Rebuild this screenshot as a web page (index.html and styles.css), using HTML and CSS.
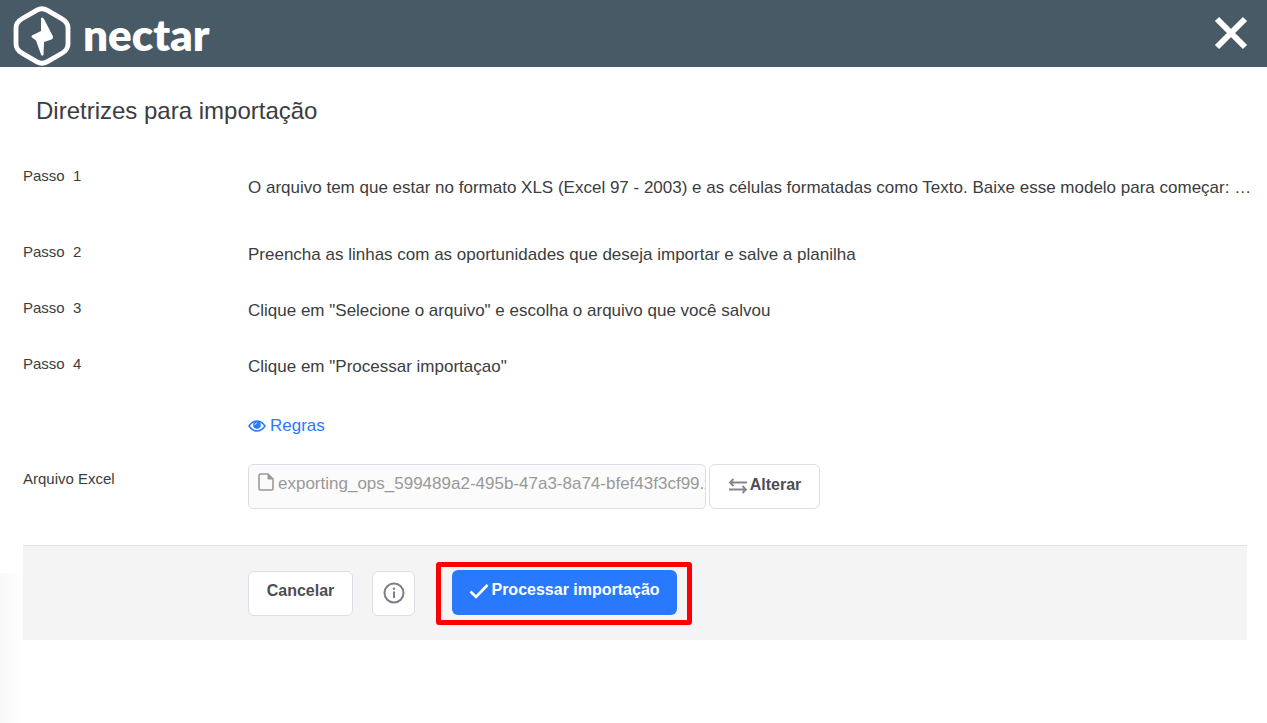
FILE: index.html
```html
<!DOCTYPE html>
<html lang="pt-BR">
<head>
<meta charset="utf-8">
<meta name="viewport" content="width=device-width, initial-scale=1">
<title>Diretrizes para importação</title>
<link rel="stylesheet" href="styles.css">
</head>
<body>
<header class="topbar">
  <a class="brand" href="#" aria-label="nectar">
    <svg class="brand-mark" viewBox="0 0 60 60" aria-hidden="true">
      <path d="M25 4.200Q30 1.300 35 4.200L50 12.800Q56 16.300 56 22V38Q56 43.700 50 47.200L35 55.800Q30 58.700 25 55.800L10 47.200Q4 43.700 4 38V22Q4 16.300 10 12.800Z" fill="none" stroke="#fff" stroke-width="4.800"/>
      <path d="M29 12Q30.500 10.500 32 13L41 30.500Q41.500 32.500 39.500 33.500L32 36L31.500 48.500Q30.500 51 29 48.500L24 34.500L20 31.500Q18.500 30 21 29L29 25Z" fill="#fff"/>
    </svg>
    <span class="brand-name">nectar</span>
  </a>
  <button class="close" type="button" aria-label="Fechar">
    <svg viewBox="0 0 34 34" aria-hidden="true"><path d="M3 3L31 31M31 3L3 31" stroke="#fff" stroke-width="6"/></svg>
  </button>
</header>
<main class="page">
  <h1 class="title">Diretrizes para importação</h1>
  <form class="form">
    <div class="row row-first">
      <span class="label">Passo&nbsp; 1</span>
      <p class="text">O arquivo tem que estar no formato XLS (Excel 97 - 2003) e as células formatadas como Texto. Baixe esse modelo para começar: …</p>
    </div>
    <div class="row">
      <span class="label">Passo&nbsp; 2</span>
      <p class="text">Preencha as linhas com as oportunidades que deseja importar e salve a planilha</p>
    </div>
    <div class="row">
      <span class="label">Passo&nbsp; 3</span>
      <p class="text">Clique em "Selecione o arquivo" e escolha o arquivo que você salvou</p>
    </div>
    <div class="row">
      <span class="label">Passo&nbsp; 4</span>
      <p class="text">Clique em "Processar importaçao"</p>
    </div>
    <div class="row row-rules">
      <span></span>
      <a class="rules" href="#">
        <svg class="eye" viewBox="0 0 18 12" aria-hidden="true">
          <path d="M1 6Q4.500 1 9 1T17 6Q13.500 11 9 11T1 6Z" fill="none" stroke="currentColor" stroke-width="1.500"/>
          <circle cx="9" cy="5" r="3.800" fill="currentColor"/>
          <path d="M7 4.800Q7.200 3.200 8.800 3" fill="none" stroke="#fff" stroke-width=".9"/>
        </svg>
        <span>Regras</span>
      </a>
    </div>
    <div class="row row-file">
      <label class="label" for="file">Arquivo Excel</label>
      <div class="file-group">
        <div class="file-box">
          <svg class="doc" viewBox="0 0 16 18" aria-hidden="true"><path d="M2.500 1H10L15 6V15.500Q15 17 13.500 17H2.500Q1 17 1 15.500V2.500Q1 1 2.500 1Z" fill="none" stroke="#999" stroke-width="1.600"/><path d="M10 1V6H15Z" fill="#999" stroke="#999"/></svg>
          <input class="file-name" id="file" type="text" readonly value="exporting_ops_599489a2-495b-47a3-8a74-bfef43f3cf99.xls">
        </div>
        <button class="btn btn-change" type="button">
          <svg class="swap" viewBox="0 0 20 16" aria-hidden="true"><path d="M19 4.500H2M5.500 1L2 4.500L5.500 8M1 11.500H18M14.500 8L18 11.500L14.500 15" fill="none" stroke="#85858d" stroke-width="1.800"/></svg>
          <span>Alterar</span>
        </button>
      </div>
    </div>
    <div class="actions">
      <button class="btn btn-cancel" type="button">Cancelar</button>
      <button class="btn btn-info" type="button" aria-label="Informações">
        <svg viewBox="0 0 22 22" aria-hidden="true"><circle cx="11" cy="11" r="9.500" fill="none" stroke="#7d7d85" stroke-width="2"/><path d="M11 9.500V16" stroke="#7d7d85" stroke-width="2"/><circle cx="11" cy="6.800" r="1.200" fill="#7d7d85"/></svg>
      </button>
      <div class="highlight">
        <button class="btn btn-primary" type="submit">
          <svg class="check" viewBox="0 0 20 16" aria-hidden="true"><path d="M1.500 8.500L7 14L18.500 2" fill="none" stroke="#fff" stroke-width="2.600"/></svg>
          <span>Processar importação</span>
        </button>
      </div>
    </div>
  </form>
</main>
</body>
</html>
```
FILE: styles.css
```css
* { box-sizing: border-box; }
body {
  margin: 0;
  min-height: 100vh;
  background: linear-gradient(to right, #f9f9f9, #fff 24px) no-repeat left bottom / 24px 150px #fff;
  color: #3b3d40;
  font-family: "Liberation Sans", Arial, sans-serif;
}
.topbar {
  display: flex;
  align-items: flex-start;
  justify-content: space-between;
  height: 67px;
  padding: 6px 19px 0 12px;
  background: #475a66;
}
.brand {
  display: flex;
  align-items: flex-start;
  gap: 11px;
  color: #fff;
  text-decoration: none;
}
.brand-mark { width: 60px; height: 60px; }
.brand-name {
  font: 800 44px/56px Lato, sans-serif;
}
.close {
  width: 34px;
  height: 34px;
  margin-top: 10px;
  padding: 0;
  border: 0;
  background: none;
}
.close svg { display: block; }
.page { padding: 28px 8px 0 23px; }
.title {
  margin: 0 0 39px 13px;
  font-size: 24px;
  font-weight: 400;
  line-height: 32px;
}
.row {
  display: grid;
  grid-template-columns: 225px minmax(0, 1fr);
  align-items: start;
  min-height: 56px;
}
.label { font-size: 15px; line-height: 20px; }
.text {
  margin: 1px 0 0;
  font-size: 17px;
  line-height: 24px;
  overflow: hidden;
  white-space: nowrap;
  text-overflow: ellipsis;
}
.row-first { min-height: 76px; }
.row-first .text { margin-top: 10px; }
.row-rules {
  min-height: 54px;
  padding-top: 4px;
}
.rules {
  display: flex;
  align-items: center;
  justify-self: start;
  gap: 4px;
  color: #2979ff;
  font-size: 17px;
  line-height: 24px;
  text-decoration: none;
}
.eye { width: 18px; height: 12px; }
.row-file { min-height: 81px; }
.row-file .label { padding-top: 5px; }
.file-group { display: flex; gap: 3px; }
.file-box {
  display: flex;
  align-items: flex-start;
  gap: 4px;
  flex: 0 1 458px;
  min-width: 0;
  height: 45px;
  padding: 8px 0 0 9px;
  border: 1px solid #dddde5;
  border-radius: 5px;
  background: #fbfbfb;
}
.doc { flex: none; width: 16px; height: 18px; }
.file-name {
  flex: 1;
  min-width: 0;
  height: 22px;
  padding: 0;
  border: 0;
  background: none;
  color: #999;
  font: 17px/22px "Liberation Sans", Arial, sans-serif;
}
.btn {
  display: flex;
  align-items: center;
  justify-content: center;
  gap: 2px;
  height: 45px;
  padding: 0 19px 4px;
  border: 1px solid #dddde5;
  border-radius: 6px;
  background: #fff;
  color: #4d4e54;
  font: bold 16px/20px "Liberation Sans", Arial, sans-serif;
  white-space: nowrap;
}
.btn-change { width: 111px; }
.swap, .check { flex: none; width: 20px; height: 16px; margin-top: 2px; }
.actions {
  display: flex;
  align-items: center;
  min-height: 95px;
  margin-right: 12px;
  padding-left: 225px;
  border-top: 1px solid #e0e0e0;
  background: #f4f4f4;
}
.btn-cancel { width: 105px; }
.btn-info {
  width: 43px;
  margin-left: 19px;
  padding: 0;
}
.btn-info svg { flex: none; width: 22px; height: 22px; }
.highlight {
  margin-left: 21px;
  padding: 3px 10px 5px 11px;
  border: 5px solid #f00;
  border-radius: 3px;
}
.btn-primary {
  width: 225px;
  border: 0;
  background: #2979ff;
  color: #fff;
}
```
